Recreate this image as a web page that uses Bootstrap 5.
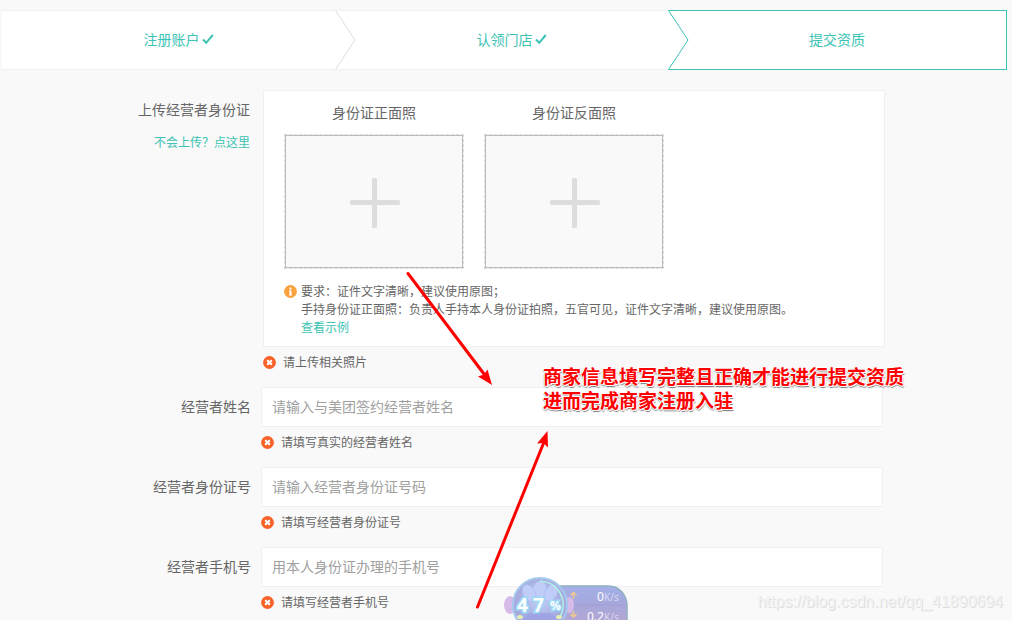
<!DOCTYPE html>
<html lang="zh-CN">
<head>
<meta charset="utf-8">
<meta name="viewport" content="width=device-width, initial-scale=1">
<title>提交资质</title>
<link href="https://cdn.jsdelivr.net/npm/bootstrap@5.3.0/dist/css/bootstrap.min.css" rel="stylesheet">
<style>
  :root { --brand: #3bc3b3; --line: #f0f0f0; }
  body {
    font-family: "Noto Sans CJK SC", sans-serif;
    font-size: 14px; line-height: 20px; color: #666; background: #f9f9f9;
  }
  a { color: var(--brand); }
  .page { min-height: 100vh; padding: 10px 5px 0 2px; }

  /* progress steps */
  .step {
    flex: 1 1 20px; height: 60px; background: #fff; color: var(--brand);
    border: solid var(--line); border-width: 1px 0; padding-bottom: 2px; gap: 2px;
  }
  .step-done { padding-left: 20px; }
  .step-now { flex-basis: 26px; border-color: var(--brand); border-right-width: 1px; }
  .step-arrow { position: absolute; left: 0; top: -1px; }

  /* form */
  .fields { margin-right: 124px; padding-top: 20px; }
  .field-name { width: 249px; text-align: right; padding-top: 9px; }
  .field-body { margin-left: 10px; }
  .field-row { height: 80px; }
  .photo-row { margin-bottom: 10px; }
  .photo-row .field-name { width: 248px; }
  .photo-row .field-body { margin-left: 13px; margin-right: -2px; }
  .help { margin-top: 14px; }
  .text-box {
    height: 40px; font-size: 14px; padding: 0 10px 2px; border: 1px solid var(--line);
    border-radius: 0; background: #fff; color: #666;
  }
  .text-box::placeholder { color: #a0a0a0; }
  .hint { font-size: 12px; line-height: 18px; }
  .warn { gap: 7px; height: 30px; }
  .panel { background: #fff; border: 1px solid var(--line); padding: 11px 20px 10px; }
  .photos { gap: 20px; }
  .photo { width: 180px; }
  .upload {
    width: 180px; height: 135px; margin-top: 12px; padding: 0;
    border: 1px dashed #ddd; background: #f9f9f9;
  }
  .upload-inner { border: 1px solid #bbb; padding: 2px 0 0 2px; }
  .notes { margin-top: 13px; gap: 4px; }
  .info { margin-top: 3px; }

  /* marks lying over the page */
  .overlay { position: absolute; left: 0; top: 0; pointer-events: none; }
  .remark {
    position: absolute; left: 543px; top: 364px; margin: 0; white-space: nowrap;
    font-size: 19px; line-height: 24px; font-weight: 700; color: #f00;
    text-shadow: 1px 0 #fff, -1px 0 #fff, 0 1px #fff, 0 -1px #fff, 1px 1px #fff, 1px 2px 1px #777, -1px 1px 1px #aaa;
  }
  .meter { position: absolute; left: 500px; top: 574px; }
  .watermark {
    position: absolute; right: 9px; top: 592px; margin: 0;
    font-family: "Liberation Sans", sans-serif; font-size: 16px;
    color: #f3f3f3; text-shadow: 1px 1px 0 #dedede;
  }
</style>
</head>
<body>
<svg class="d-none">
  <symbol id="tick" viewBox="0 0 12 12"><path d="M1 6.5 4.2 9.8 10.8 2" fill="none" stroke="#3bc3b3" stroke-width="2"/></symbol>
  <symbol id="cross" viewBox="0 0 13 13"><circle cx="6.5" cy="6.5" r="6.4" fill="#f86228"/><path d="M4.2 4.2l4.6 4.6M8.8 4.2 4.2 8.8" stroke="#fff" stroke-width="2.2"/></symbol>
  <symbol id="plus" viewBox="0 0 50 50"><rect y="22" width="50" height="5" rx="1.5" fill="#ddd"/><rect x="22" width="5" height="50" rx="1.5" fill="#ddd"/></symbol>
</svg>

<div class="page position-relative overflow-hidden">
  <nav class="d-flex">
    <div class="step step-done d-flex align-items-center justify-content-center"><span>注册账户</span><svg width="12" height="12"><use href="#tick"/></svg></div>
    <div class="step step-done position-relative d-flex align-items-center justify-content-center">
      <svg class="step-arrow" width="21" height="60"><path d="M.5 .5 20 30 .5 59.5" fill="none" stroke="#ddd"/></svg>
      <span>认领门店</span><svg width="12" height="12"><use href="#tick"/></svg>
    </div>
    <div class="step step-now position-relative d-flex align-items-center justify-content-center">
      <svg class="step-arrow" width="21" height="60"><path d="M0 0H.5L20 30 .5 60H0z" fill="#fff"/><path d="M.5 .5 20 30 .5 59.5" fill="none" stroke="#3bc3b3"/></svg>
      <span>提交资质</span>
    </div>
  </nav>

  <form class="fields">
    <div class="photo-row d-flex">
      <div class="field-name flex-shrink-0">
        <div>上传经营者身份证</div>
        <a class="help hint d-block text-decoration-none" href="#">不会上传？点这里</a>
      </div>
      <div class="field-body flex-grow-1">
        <div class="panel">
          <div class="photos d-flex">
            <div class="photo text-center"><div id="front">身份证正面照</div>
              <button type="button" class="upload d-block" aria-labelledby="front"><span class="upload-inner d-flex h-100 align-items-center justify-content-center"><svg width="50" height="50"><use href="#plus"/></svg></span></button></div>
            <div class="photo text-center"><div id="back">身份证反面照</div>
              <button type="button" class="upload d-block" aria-labelledby="back"><span class="upload-inner d-flex h-100 align-items-center justify-content-center"><svg width="50" height="50"><use href="#plus"/></svg></span></button></div>
          </div>
          <div class="notes hint d-flex">
            <svg class="info flex-shrink-0" width="13" height="13" viewBox="0 0 13 13"><circle cx="6.5" cy="6.5" r="6.4" fill="#f9a13c"/><path d="M5.5 2.500h2v2h-2zM5 5.500h2.500v4H8v1H5v-1h.5v-3H5z" fill="#fff"/></svg>
            <div>要求：证件文字清晰，建议使用原图；<br>手持身份证正面照：负责人手持本人身份证拍照，五官可见，证件文字清晰，建议使用原图。<br><a class="text-decoration-none" href="#">查看示例</a></div>
          </div>
        </div>
        <div class="warn hint d-flex align-items-center"><svg width="13" height="13"><use href="#cross"/></svg><span>请上传相关照片</span></div>
      </div>
    </div>

    <div class="field-row d-flex">
      <label class="field-name flex-shrink-0" for="name">经营者姓名</label>
      <div class="field-body flex-grow-1">
        <input class="form-control text-box" id="name" type="text" placeholder="请输入与美团签约经营者姓名">
        <div class="warn hint d-flex align-items-center"><svg width="13" height="13"><use href="#cross"/></svg><span>请填写真实的经营者姓名</span></div>
      </div>
    </div>
    <div class="field-row d-flex">
      <label class="field-name flex-shrink-0" for="idno">经营者身份证号</label>
      <div class="field-body flex-grow-1">
        <input class="form-control text-box" id="idno" type="text" placeholder="请输入经营者身份证号码">
        <div class="warn hint d-flex align-items-center"><svg width="13" height="13"><use href="#cross"/></svg><span>请填写经营者身份证号</span></div>
      </div>
    </div>
    <div class="d-flex">
      <label class="field-name flex-shrink-0" for="phone">经营者手机号</label>
      <div class="field-body flex-grow-1">
        <input class="form-control text-box" id="phone" type="tel" placeholder="用本人身份证办理的手机号">
        <div class="warn hint d-flex align-items-center"><svg width="13" height="13"><use href="#cross"/></svg><span>请填写经营者手机号</span></div>
      </div>
    </div>
  </form>

  <svg class="meter" width="130" height="46" viewBox="0 0 130 46">
    <defs>
      <linearGradient id="pill" x1="0" y1="0" x2="0" y2="1"><stop offset="0" stop-color="#a3b0e8"/><stop offset=".5" stop-color="#a5a8dc"/><stop offset="1" stop-color="#b3a6d4"/></linearGradient>
      <radialGradient id="orb" cx=".5" cy=".4" r=".6"><stop offset="0" stop-color="#c3cff8"/><stop offset=".6" stop-color="#a9b0e2"/><stop offset="1" stop-color="#a5a2d6"/></radialGradient>
    </defs>
    <path d="M50 12h59a18 20 0 0 1 18 20v14H50z" fill="url(#pill)"/>
    <path d="M60 12h49a18 20 0 0 1 18 20v14" fill="none" stroke="#8fb0c0" stroke-width="1.5"/>
    <path d="M62 31h64" stroke="#a394c8" opacity=".5"/>
    <ellipse cx="10" cy="31" rx="6" ry="9" fill="#d6bbe9"/><ellipse cx="69" cy="31" rx="5" ry="8" fill="#d6bbe9"/>
    <circle cx="40" cy="31" r="27" fill="url(#orb)" stroke="#a5c8ee" stroke-width="2"/>
    <g fill="#c0cdf8" stroke="#aab9ea" stroke-width=".6"><ellipse cx="40" cy="16" rx="7" ry="9"/><ellipse cx="29" cy="19" rx="6" ry="9" transform="rotate(-30 29 19)"/><ellipse cx="51" cy="19" rx="6" ry="9" transform="rotate(30 51 19)"/></g>
    <path d="M24 46q2-8 8-7h17q6 1 8 7z" fill="#9fa4e4"/>
    <path d="M40 7a24 24 0 0 1 20 36" fill="none" stroke="#aef0e4" stroke-width="1.6"/>
    <ellipse cx="20" cy="43" rx="3" ry="2" fill="#e3efb2"/><ellipse cx="59" cy="43" rx="3" ry="2" fill="#e3efb2"/>
    <g font-family="Open Sans, sans-serif" font-weight="700" fill="#fff" stroke="#9bd9f6" stroke-width="3" paint-order="stroke"><text x="17" y="38" font-size="19">4</text><text x="33" y="38" font-size="19">7</text><text x="50" y="36" font-size="12">%</text></g>
    <path d="M73.500 25v-6M70.500 21.500l3-3 3 3M73.500 37v6M70.500 40l3 3 3-3" fill="none" stroke="#f3c98f" stroke-width="1.5"/>
    <g font-family="Noto Sans, sans-serif" fill="#fff"><text x="97" y="27" font-size="12">0</text><text x="104" y="27" font-size="10" fill="#d9d8f0">K/s</text><text x="87" y="47" font-size="12">0.2</text><text x="104" y="47" font-size="10" fill="#d9d8f0">K/s</text></g>
  </svg>

  <svg class="overlay" width="600" height="615" viewBox="0 0 600 615">
    <g stroke="#f00" stroke-width="3" stroke-linecap="round"><path d="M408 273.500 484 374M477.500 607 544 442"/></g>
    <path d="M492 385 478 376.500 484 374.500 487.500 369.500zM547.500 431 537 443.500 543.500 443 548 447.500z" fill="#f00"/>
  </svg>
  <p class="remark">商家信息填写完整且正确才能进行提交资质<br>进而完成商家注册入驻</p>
  <p class="watermark">https://blog.csdn.net/qq_41890694</p>
</div>
<script src="https://cdn.jsdelivr.net/npm/bootstrap@5.3.0/dist/js/bootstrap.bundle.min.js"></script>
</body>
</html>
